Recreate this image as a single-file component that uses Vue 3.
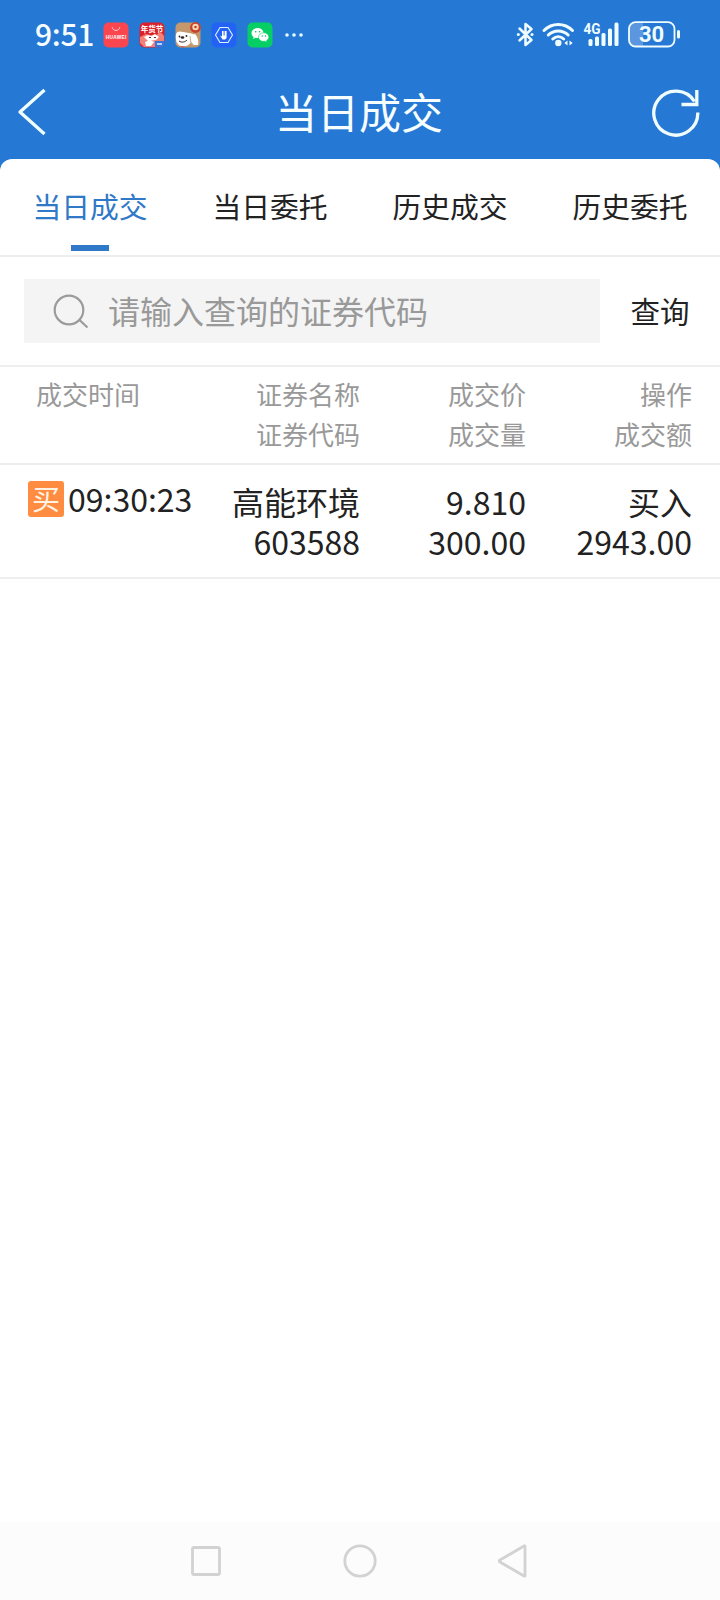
<script setup>
import { ref } from 'vue';

const tabs = ['当日成交', '当日委托', '历史成交', '历史委托'];
const activeTab = ref(0);
const keyword = ref('');

const deals = [
  {
    id: 1,
    flag: '买',
    time: '09:30:23',
    name: '高能环境',
    code: '603588',
    price: '9.810',
    volume: '300.00',
    action: '买入',
    amount: '2943.00'
  }
];
</script>

<template>
  <div class="page">
    <div class="top">
      <div class="status-bar">
        <span class="clock">9:51</span>

        <div class="apps">
          <svg width="26" height="26" viewBox="0 0 26 26">
            <rect x="0.5" y="0.5" width="25" height="25" rx="5" fill="#fb4650" />
            <path d="M9.2 5.2c.5 4.3 7.1 4.3 7.6 0" fill="none" stroke="#ffd0d0" stroke-width="1" />
            <text x="13" y="16.5" class="brand" text-anchor="middle" textLength="20.5">HUAWEI</text>
          </svg>

          <svg width="26" height="26" viewBox="0 0 26 26">
            <rect x="0.5" y="0.5" width="25" height="25" rx="5" fill="#dc2028" />
            <path d="M1 15l6-3 8 2 7-4 3 4v6l-3 5H5l-4-4z" fill="#f48078" />
            <path d="M5 15l4-2 3 1 4-2 4 3-3 3-8 1zM6 20l5-2 4 2-3 4H7z" fill="#fff" />
            <text x="13" y="10" class="festival" text-anchor="middle">年货节</text>
            <path d="M10 15.5h2M15 15.5h2" stroke="#68262a" stroke-width="1" />
            <path d="M16 19h9.5v2a4.500 4.500 0 0 1-4.500 4.500h-5z" fill="#3576de" />
            <path d="M18 21h5v2h-5z" fill="#b7d5ff" />
          </svg>

          <svg width="26" height="26" viewBox="0 0 26 26">
            <rect x="0.5" y="0.5" width="25" height="25" rx="5" fill="#c4986c" />
            <path d="M1 12c1-3 4-3 7-2l6 1c3 0 4 2 6 1 3 3 4 8 3 11h-4l-3-3c-2 4-6 5-10 4-4-1-6-6-5-12z" fill="#fff" />
            <path d="M15 14l1 7 3 3" fill="none" stroke="#c8ac91" stroke-width="1" />
            <circle cx="4.5" cy="14.500" r="0.900" fill="#302522" />
            <circle cx="11.5" cy="14" r="0.900" fill="#302522" />
            <ellipse cx="7.5" cy="15.5" rx="1.800" ry="1.200" fill="#302522" />
            <path d="M4 19c3 2 6 1 8-1" fill="none" stroke="#302522" stroke-width="1" />
            <path d="M4 24.5h6l-2 1z" fill="#d63b35" />
            <circle cx="20.5" cy="5.5" r="5.4" fill="#c8402c" />
            <circle cx="20.5" cy="5" r="3.2" fill="#f6d9b4" />
            <circle cx="20.5" cy="5" r="1.3" fill="#c8402c" />
          </svg>

          <svg width="26" height="26" viewBox="0 0 26 26">
            <rect x="0.5" y="0.5" width="25" height="25" rx="5" fill="#2262f4" />
            <path d="M9 5.5h8l4.5 7.5-4.500 7.500H9L4.500 13z" fill="none" stroke="#e6eeff" stroke-width="1.1" />
            <path d="M9 13.500l2 1V9h1.600v4.500h1V9h2v7l-1.500 1.500h-2.600z" fill="#fff" />
          </svg>

          <svg width="26" height="26" viewBox="0 0 26 26">
            <rect x="0.5" y="0.5" width="25" height="25" rx="5" fill="#05cf64" />
            <path d="M10.500 6C7 6 4.500 8.300 4.500 11c0 1.600.8 3 2.200 4l-.6 2 2.400-1.200c4.500 1 8-1.400 8-4.800 0-2.700-2.600-5-6-5z" fill="#fff" />
            <path d="M16.800 10.800c-3 0-5.300 2-5.300 4.300 0 2.800 3 4.900 6.600 4.100l2 1-.5-1.700c1.500-.9 2.200-2 2.200-3.400 0-2.400-2.200-4.300-5-4.300z" fill="#fff" stroke="#05cf64" stroke-width="0.6" />
            <g fill="#05b85a">
              <circle cx="8.7" cy="9.7" r="0.8" />
              <circle cx="12.5" cy="9.7" r="0.8" />
              <circle cx="15.2" cy="14" r="0.7" />
              <circle cx="18.5" cy="14" r="0.7" />
            </g>
          </svg>
        </div>

        <svg class="more" width="18" height="4" viewBox="0 0 18 4" fill="#e8fbff">
          <circle cx="2" cy="2" r="1.8" />
          <circle cx="9" cy="2" r="1.8" />
          <circle cx="16" cy="2" r="1.8" />
        </svg>

        <svg class="signals" width="166" height="28" viewBox="0 0 166 28">
          <!-- bluetooth -->
          <g fill="none" stroke="#f0fdff" stroke-width="2.500" stroke-linejoin="round" stroke-linecap="round">
            <path d="M3.500 7.500l12 11.500-6 5V3l6 5-12 11.500" />
          </g>
          <circle cx="2.300" cy="13.500" r="1.500" fill="#f0fdff" />
          <circle cx="16" cy="13.500" r="1.500" fill="#f0fdff" />
          <!-- wifi -->
          <g fill="none" stroke="#f0fdff" stroke-width="3" stroke-linecap="round">
            <path d="M28 9.500C36 1.500 48.500 1.500 56.500 9.500" />
            <path d="M32.300 14c5.500-5.500 14.300-5.500 19.900 0" />
            <path d="M36.800 18c3.200-3 7.700-3 10.900 0" />
          </g>
          <circle cx="42.300" cy="22" r="3.200" fill="#f0fdff" />
          <path d="M51.500 19.500v5l-3.200-2.500zM53.500 19.500v5l3.200-2.500z" fill="#f0fdff" />
          <!-- mobile signal -->
          <text x="67.500" y="12.500" class="network" textLength="17" lengthAdjust="spacingAndGlyphs">4G</text>
          <g fill="#f0fdff">
            <rect x="72.500" y="18" width="4" height="7" rx="1.500" />
            <rect x="79" y="15.500" width="4" height="9.500" rx="1.500" />
            <rect x="85.500" y="12" width="4" height="13" rx="1.500" />
            <rect x="92" y="7.500" width="4" height="17.500" rx="1.500" />
            <rect x="98.500" y="1.500" width="4" height="23.500" rx="1.500" />
          </g>
          <!-- battery -->
          <path d="M119 1.500h8v24h-8a6 6 0 0 1-6-6v-12a6 6 0 0 1 6-6z" fill="#5c96de" />
          <rect x="113" y="1.200" width="45.500" height="24.300" rx="6.500" fill="none" stroke="#f0fdff" stroke-width="1.800" />
          <rect x="161" y="9" width="3" height="8.500" rx="1.500" fill="#f0fdff" />
          <text x="135.500" y="21" class="battery" text-anchor="middle">30</text>
        </svg>
      </div>

      <header class="title-bar">
        <svg width="30" height="48" viewBox="0 0 30 48" fill="none" stroke="#f0fdff" stroke-width="3.300">
          <path d="M27.500 2L3 24l24.500 22" stroke-linejoin="round" />
        </svg>
        <h1>当日成交</h1>
        <svg width="50" height="50" viewBox="0 0 50 50" fill="none" stroke="#f0fdff" stroke-width="3.300">
          <path d="M46.800 25.500A22 22 0 1 1 43.500 14.500" />
          <path d="M45.800 3v14.500H30.500" />
        </svg>
      </header>
    </div>

    <main class="sheet">
      <nav class="tabs">
        <button
          v-for="(tab, index) in tabs"
          :key="tab"
          type="button"
          class="tab"
          :class="{ active: index === activeTab }"
          @click="activeTab = index"
        >
          {{ tab }}
        </button>
      </nav>

      <div class="search">
        <label class="search-box">
          <svg width="36" height="36" viewBox="0 0 36 36" fill="none" stroke="#9b9b9b" stroke-width="2.200">
            <circle cx="16" cy="17" r="14.300" />
            <path d="M26.500 27l8 7.500" />
          </svg>
          <input v-model="keyword" type="text" placeholder="请输入查询的证券代码" />
        </label>
        <button type="button" class="search-btn">查询</button>
      </div>

      <div class="row head">
        <div class="time">成交时间</div>
        <div>证券名称<br />证券代码</div>
        <div>成交价<br />成交量</div>
        <div>操作<br />成交额</div>
      </div>

      <div v-for="deal in deals" :key="deal.id" class="row deal">
        <div class="time">
          <span class="flag">{{ deal.flag }}</span>
          <span>{{ deal.time }}</span>
        </div>
        <div>{{ deal.name }}<br />{{ deal.code }}</div>
        <div>{{ deal.price }}<br />{{ deal.volume }}</div>
        <div>{{ deal.action }}<br />{{ deal.amount }}</div>
      </div>
    </main>

    <footer class="system-nav">
      <svg width="34" height="34" viewBox="0 0 34 34">
        <rect x="3.500" y="3.500" width="27" height="27" rx="1.500" />
      </svg>
      <svg width="34" height="34" viewBox="0 0 34 34">
        <circle cx="17" cy="17" r="15.200" />
      </svg>
      <svg width="34" height="34" viewBox="0 0 34 34">
        <path d="M28 2.500v29q0 1-1 .5L3 18q-1.500-1 0-2L27 2q1-.5 1 .5z" />
      </svg>
    </footer>
  </div>
</template>

<style>
body {
  margin: 0;
}
</style>

<style scoped>
.page {
  display: flex;
  flex-direction: column;
  width: 720px;
  height: 1600px;
  overflow: hidden;
  background: #fff;
  color: #222;
  font-family: "Noto Sans CJK SC", sans-serif;
}

button,
input {
  border: 0;
  padding: 0;
  background: none;
  color: inherit;
  font-family: inherit;
}

.top {
  height: 171px;
  flex: none;
  background: #2678d5;
  color: #f6feff;
}

.status-bar {
  display: flex;
  align-items: center;
  height: 70px;
  padding-left: 35px;
}

.clock {
  width: 68px;
  font-size: 30px;
  font-weight: 500;
  line-height: 66px;
  height: 70px;
  letter-spacing: -0.3px;
}

.apps {
  display: flex;
  gap: 10px;
}

.more {
  margin-left: 12px;
}

.signals {
  margin-left: auto;
  margin-right: 38px;
}

.brand {
  fill: #fff;
  font: 700 4.8px "Liberation Sans", sans-serif;
}

.festival {
  fill: #fff;
  font: 700 7.5px "Noto Sans CJK SC", sans-serif;
}

.network {
  fill: #f0fdff;
  font: 700 15px Roboto, sans-serif;
}

.battery {
  fill: #f0fdff;
  font: 700 22px Roboto, sans-serif;
}

.title-bar {
  display: flex;
  align-items: center;
  justify-content: space-between;
  height: 84px;
  padding: 0 19px 0 17px;
}

h1 {
  margin: 0 0 0 20px;
  padding-bottom: 2px;
  font-size: 42px;
  font-weight: 400;
  line-height: 82px;
}

.sheet {
  flex: 1;
  margin-top: -12px;
  border-radius: 12px 12px 0 0;
  background: #fff;
}

.tabs {
  display: flex;
  height: 96px;
  border-bottom: 2px solid #eee;
}

.tab {
  display: flex;
  flex: 1;
  flex-direction: column;
  align-items: center;
  padding-top: 25px;
  font-size: 28.8px;
  line-height: 44px;
}

.tab.active {
  color: #3078c8;
}

.tab.active::after {
  content: "";
  width: 38px;
  height: 6px;
  margin-top: 17px;
  background: #3078c8;
}

.search {
  display: flex;
  align-items: center;
  height: 108px;
  padding-left: 24px;
  border-bottom: 2px solid #eee;
}

.search-box {
  display: flex;
  align-items: center;
  gap: 19px;
  box-sizing: border-box;
  width: 576px;
  height: 64px;
  padding-left: 29px;
  background: #f4f4f4;
}

input {
  flex: 1;
  height: 64px;
  padding-bottom: 3px;
  box-sizing: border-box;
  outline: none;
  font-size: 32px;
}

input::placeholder {
  color: #999;
}

.search-btn {
  flex: 1;
  padding-bottom: 2px;
  font-size: 29.5px;
}

.row {
  display: grid;
  grid-template-columns: 200px 160px 166px 166px;
  border-bottom: 2px solid #eee;
  text-align: right;
  line-height: 40px;
}

.head {
  padding: 7px 0 9px;
  color: #999;
  font-size: 26px;
}

.head .time {
  padding-left: 36px;
  text-align: left;
}

.deal {
  padding: 16px 0;
  font-size: 32px;
}

.deal .time {
  display: flex;
  align-items: center;
  gap: 4px;
  height: 36px;
  padding-left: 28px;
}

.deal .time span:last-child {
  padding-bottom: 3px;
}

.flag {
  width: 36px;
  height: 36px;
  border-radius: 3px;
  background: #ff8c40;
  color: #fff3e4;
  font-size: 28px;
  line-height: 34px;
  text-align: center;
}

.system-nav {
  display: flex;
  flex: none;
  justify-content: center;
  gap: 120px;
  height: 56px;
  padding-top: 22px;
  background: #fcfcfc;
}

.system-nav svg {
  fill: none;
  stroke: #d2d2d2;
  stroke-width: 2.8;
}
</style>
